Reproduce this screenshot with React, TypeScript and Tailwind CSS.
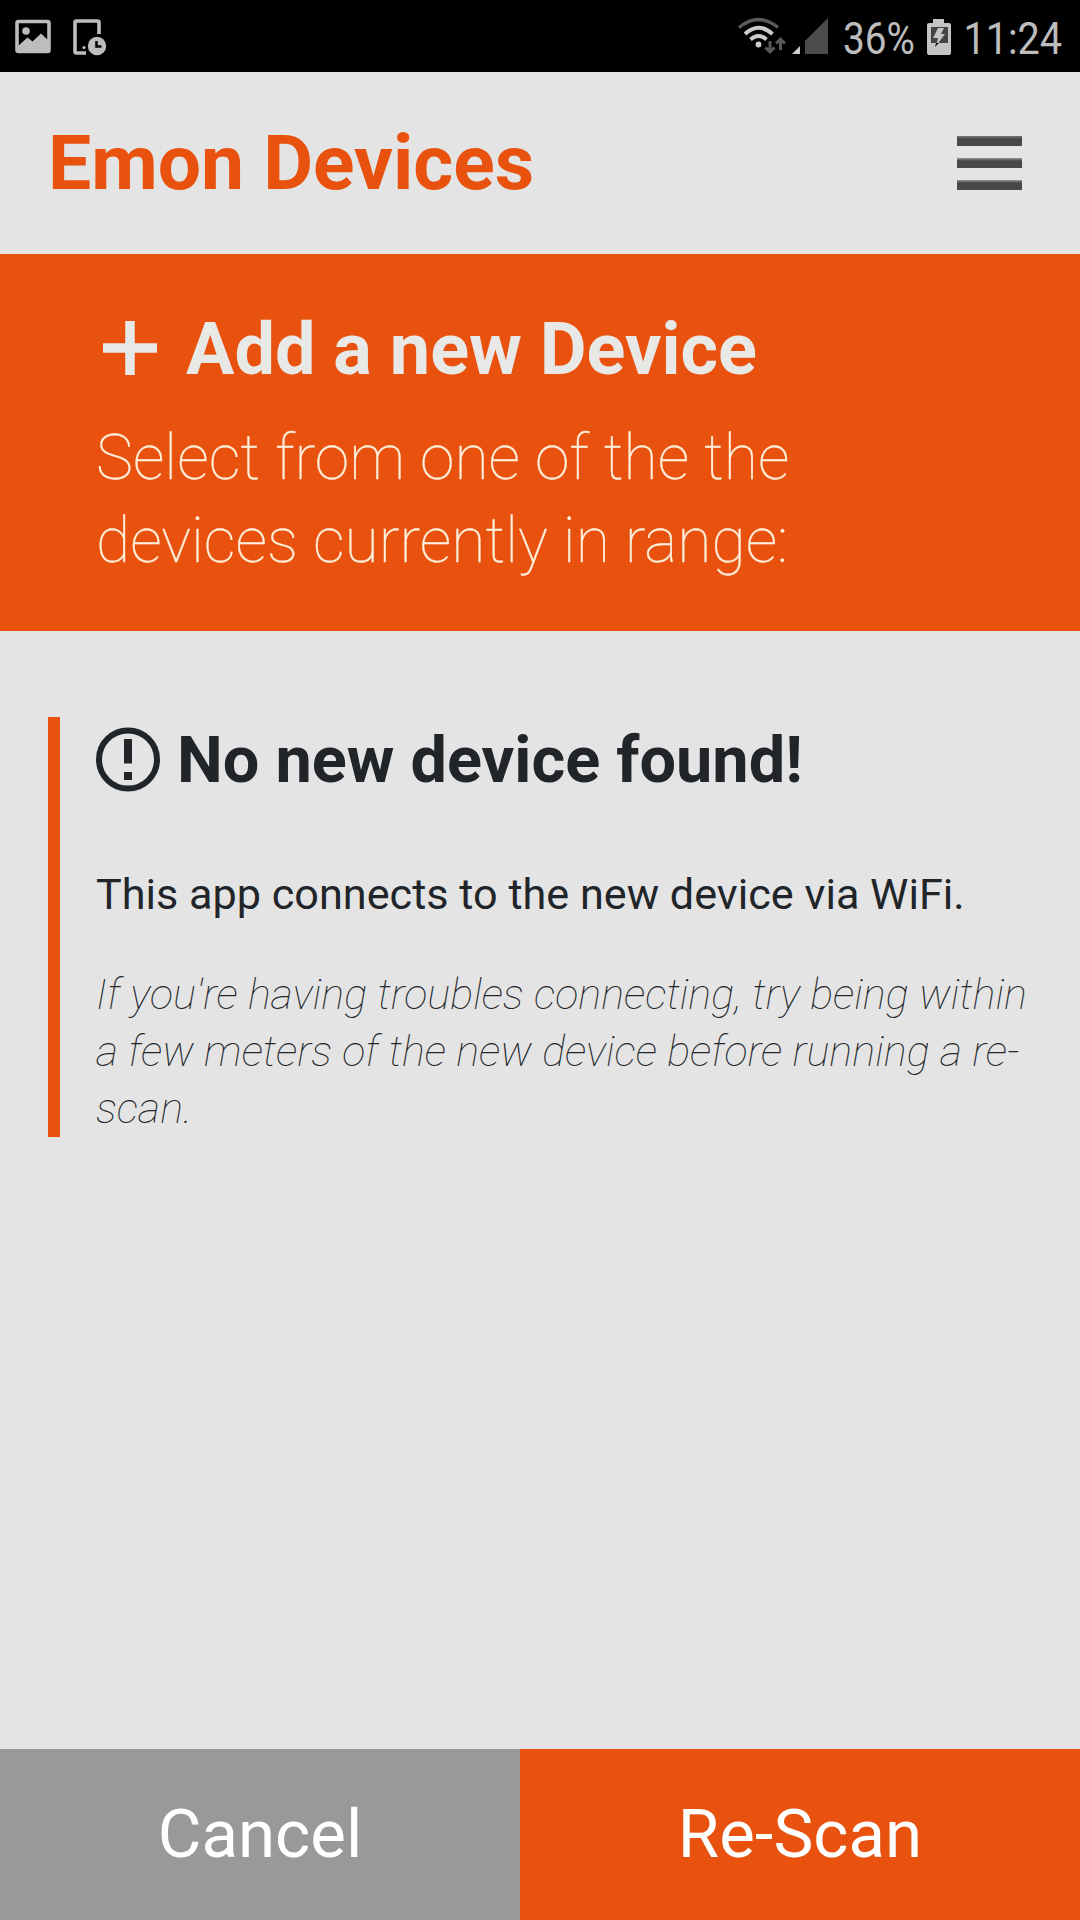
export default function App() {
  return (
    <div className="flex h-[1920px] w-[1080px] flex-col overflow-hidden bg-[#e4e4e4] font-['Roboto',sans-serif] text-[#212529]">
      <div className="flex h-[72px] shrink-0 bg-black text-[#bdbdbd]">
        <svg width="120" height="72" viewBox="0 0 120 72" fill="none" stroke="currentColor" strokeWidth="3.6">
          <rect x="17" y="21.5" width="32" height="30" rx="1.5" />
          <circle cx="26" cy="31" r="3.8" fill="currentColor" stroke="none" />
          <path d="M18 46l9.500-8.500 5 4 8.500-8 7.500 7v11H18z" fill="currentColor" stroke="none" />
          <path d="M99 34V22.500q0-1.500-1.500-1.500h-21q-1.500 0-1.500 1.500v29q0 1.500 1.500 1.500H86" />
          <circle cx="84" cy="47.500" r="1.600" fill="currentColor" stroke="none" />
          <circle cx="97" cy="46" r="9.200" fill="currentColor" stroke="none" />
          <path d="M96.500 41v5.500h5" stroke="#000" strokeWidth="2.600" />
        </svg>
        <div className="flex-1" />
        <svg width="105" height="72" viewBox="735 0 105 72" fill="none" strokeWidth="3.4">
          <path d="M740 27.500Q759.500 11.500 779 27.500" stroke="#5a5a5a" />
          <g stroke="#ccc" strokeWidth="3.8"><path d="M746 34Q759.500 21.500 773.500 34M751.500 39.500Q759.500 32.500 767.500 39.500" /></g>
          <circle cx="759.500" cy="44.500" r="2.900" fill="#ccc" />
          <path d="M771 41v11M766.500 47.500l4.500 4.500 4.500-4.500M781.500 50V39M777 43.500l4.500-4.500 4.500 4.500" stroke="#5a5a5a" strokeWidth="3" />
          <path d="M793 54l8-8v8z" fill="#ccc" />
          <path d="M806 54V41l23-23v36z" fill="#4c4c4c" />
        </svg>
        <div className="flex w-[86px] items-center pl-[4px] pt-1.5"><span className="origin-left scale-x-[.86] text-[45px]">36%</span></div>
        <svg width="28" height="72" viewBox="925 0 28 72">
          <path d="M933 19h11v4h5q2 0 2 2v28q0 2-2 2h-20q-2 0-2-2V25q0-2 2-2h4z" fill="#c4c4c4" />
          <path d="M931 27h17v16h-17z" fill="#444" />
          <path d="M938 28h6l-3 6h4l-9 12 2-8h-5z" fill="#c4c4c4" />
          <path d="M936 43h3l-4 4z" fill="#111" />
        </svg>
        <div className="flex w-[127px] items-center justify-end pr-[18px] pt-1.5"><span className="origin-right scale-x-[.88] text-[45px]">11:24</span></div>
      </div>
      <header className="flex h-[182px] shrink-0 items-center justify-between pl-12 pr-[58px]">
        <h1 className="whitespace-nowrap text-[76.800px] font-bold leading-none text-[#e9510e]">Emon Devices</h1>
        <div className="flex h-[54px] w-[65px] flex-col justify-between">
          <i className="h-2.5 bg-linear-to-b from-[#777] via-[#464848] via-30% to-[#484a4a]" />
          <i className="h-2.5 bg-linear-to-b from-[#999] via-[#464848] via-30% to-[#484a4a]" />
          <i className="h-2.5 bg-linear-to-b from-[#999] via-[#464848] via-30% to-[#484a4a]" />
        </div>
      </header>
      <section className="h-[377px] shrink-0 bg-[#e9510e] px-24 pt-[54px] text-[#e8e8e6]">
        <h2 className="flex items-center whitespace-nowrap text-[72px] font-bold leading-[84px]"><svg className="mb-1 ml-[7px] mr-[29px]" width="54" height="54" viewBox="0 0 54 54" stroke="currentColor" strokeWidth="9.500"><path d="M27 0v54M0 27h54" /></svg>Add a new Device</h2>
        <p className="mt-[24px] whitespace-nowrap text-[62.400px] font-thin leading-[83px] text-[#fff0dc] [-webkit-text-stroke:0.3px_#fff0dc]">Select from one of the the<br />devices currently in range:</p>
      </section>
      <main className="flex-1 pl-12 pt-[86px]">
        <div className="h-[420px] border-l-[12px] border-[#e9510e] pl-9">
          <h3 className="flex h-[84px] items-center whitespace-nowrap text-[64.800px] font-bold"><svg className="-ml-0.5 mr-[17px]" width="66" height="66" viewBox="0 0 66 66" fill="none" stroke="currentColor" strokeWidth="6"><circle cx="34" cy="33.500" r="29" /><path d="M34 13v24.500M34 46v8" strokeWidth="8" /></svg><span className="mt-1">No new device found!</span></h3>
          <p className="mt-[65px] whitespace-nowrap text-[43.200px] leading-[57px]">This app connects to the new device via WiFi.</p>
          <p className="mt-[43px] whitespace-nowrap text-[43.200px] font-thin italic leading-[57px]">If you're having troubles connecting, try being within<br />a few meters of the new device before running a re-<br />scan.</p>
        </div>
      </main>
      <footer className="flex h-[171px] shrink-0 text-[67.200px] text-white"><button className="w-[520px] bg-[#999]">Cancel</button><button className="flex-1 bg-[#e9510e]">Re-Scan</button></footer>
    </div>
  );
}
